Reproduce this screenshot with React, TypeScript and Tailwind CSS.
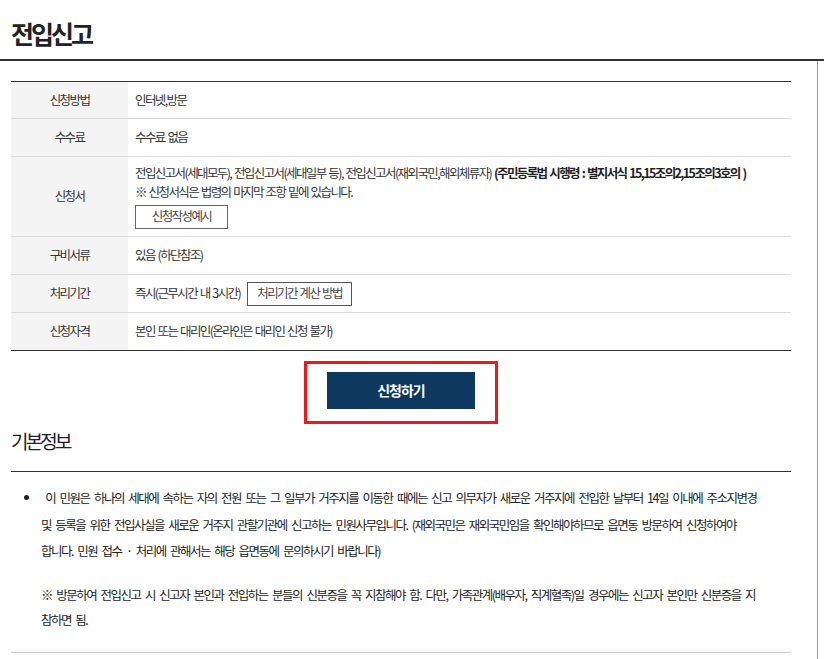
const font = { fontFamily: '"Noto Sans CJK KR", "Noto Sans", sans-serif' }

interface Row {
  label: string
  body: React.ReactNode
  cls: string
}

const rows: Row[] = [
  { label: '신청방법', body: '인터넷,방문', cls: 'h-[37px]' },
  { label: '수수료', body: '수수료 없음', cls: 'h-[38px]' },
  {
    label: '신청서',
    cls: 'h-[80px]',
    body: (
      <div className="pt-[5px] pb-[7px]">
        <p className="whitespace-nowrap leading-[19px]">
          전입신고서(세대모두), 전입신고서(세대일부 등), 전입신고서(재외국민,해외체류자){' '}
          <b className="font-bold text-[#222]">(주민등록법 시행령 : 별지서식 15,15조의2,15조의3호의 )</b>
        </p>
        <p className="leading-[19px]">※ 신청서식은 법령의 마지막 조항 밑에 있습니다.</p>
        <button
          type="button"
          className="mt-[4px] h-[24px] w-[93px] border border-[#666] bg-white text-[12.5px] text-[#444]"
        >
          신청작성예시
        </button>
      </div>
    ),
  },
  { label: '구비서류', body: '있음 (하단참조)', cls: 'h-[38px]' },
  {
    label: '처리기간',
    cls: 'h-[38px]',
    body: (
      <div className="flex items-center gap-[7px]">
        <span>즉시(근무시간 내 3시간)</span>
        <button
          type="button"
          className="h-[24px] w-[105px] border border-[#555] bg-white text-[12.5px] text-[#444] [word-spacing:1.5px]"
        >
          처리기간 계산 방법
        </button>
      </div>
    ),
  },
  { label: '신청자격', body: '본인 또는 대리인(온라인은 대리인 신청 불가)', cls: 'h-[37px]' },
]

export default function App() {
  return (
    <div className="w-[824px] min-h-[659px] bg-white text-[#333]" style={font}>
      <header className="h-[61px] border-b-2 border-[#333] pl-[11px] pt-[14px]">
        <h1 className="text-[25px] leading-[38px] font-bold tracking-[-3px] text-[#222]">전입신고</h1>
      </header>

      <div className="flex">
        <main className="w-[817px] pl-[11px] pr-[26px] pb-[6px]">
          {/* 신청 정보 표 */}
          <div className="mt-[20px] border-t border-b border-t-[#333] border-b-[#333] text-[12.5px] tracking-[-1.6px] [word-spacing:1.5px]">
            {rows.map((row, i) => (
              <div
                key={row.label}
                className={`flex ${row.cls} ${i < rows.length - 1 ? 'border-b border-[#d9d9d9]' : ''}`}
              >
                <div className="flex w-[117px] shrink-0 items-center justify-center bg-[#f4f4f4] text-[#333]">
                  {row.label}
                </div>
                <div className="flex flex-1 items-center pl-[7px] text-[#333]">{row.body}</div>
              </div>
            ))}
          </div>

          <div className="mt-[10px] flex justify-center">
            <div className="border-[3px] border-[#f01818] px-[20px] pt-[8px] pb-[12px]">
              <button
                type="button"
                className="h-[37px] w-[148px] bg-[#0d3960] text-[14px] font-bold tracking-[-1px] text-white"
              >
                신청하기
              </button>
            </div>
          </div>

          {/* 기본정보 */}
          <h2 className="border-b border-[#333] pb-[13px] text-[19px] leading-[34px] tracking-[-2.8px] text-[#222]">
            기본정보
          </h2>

          <div className="border-b border-[#ccc] pb-[20px] pt-[13px] text-[12.5px] tracking-[-1.5px] text-[#222] [word-spacing:3px]">
            <ul className="list-disc pl-[30px] marker:text-[#222]">
              <li className="whitespace-nowrap leading-[26.5px]">
                &nbsp;이 민원은 하나의 세대에 속하는 자의 전원 또는 그 일부가 거주지를 이동한 때에는 신고 의무자가 새로운
                거주지에 전입한 날부터 14일 이내에 주소지변경
                <br />및 등록을 위한 전입사실을 새로운 거주지 관할기관에 신고하는 민원사무입니다. (재외국민은 재외국민임을
                확인해야하므로 읍면동 방문하여 신청하여야
                <br />
                합니다. 민원 접수 · 처리에 관해서는 해당 읍면동에 문의하시기 바랍니다)
              </li>
            </ul>
            <p className="mt-[17px] whitespace-nowrap pl-[30px] leading-[25px]">
              ※ 방문하여 전입신고 시 신고자 본인과 전입하는 분들의 신분증을 꼭 지참해야 함. 다만, 가족관계(배우자,
              직계혈족)일 경우에는 신고자 본인만 신분증을 지
              <br />
              참하면 됨.
            </p>
          </div>
        </main>
        <div className="flex-1 border-l border-[#999]" />
      </div>
    </div>
  )
}
